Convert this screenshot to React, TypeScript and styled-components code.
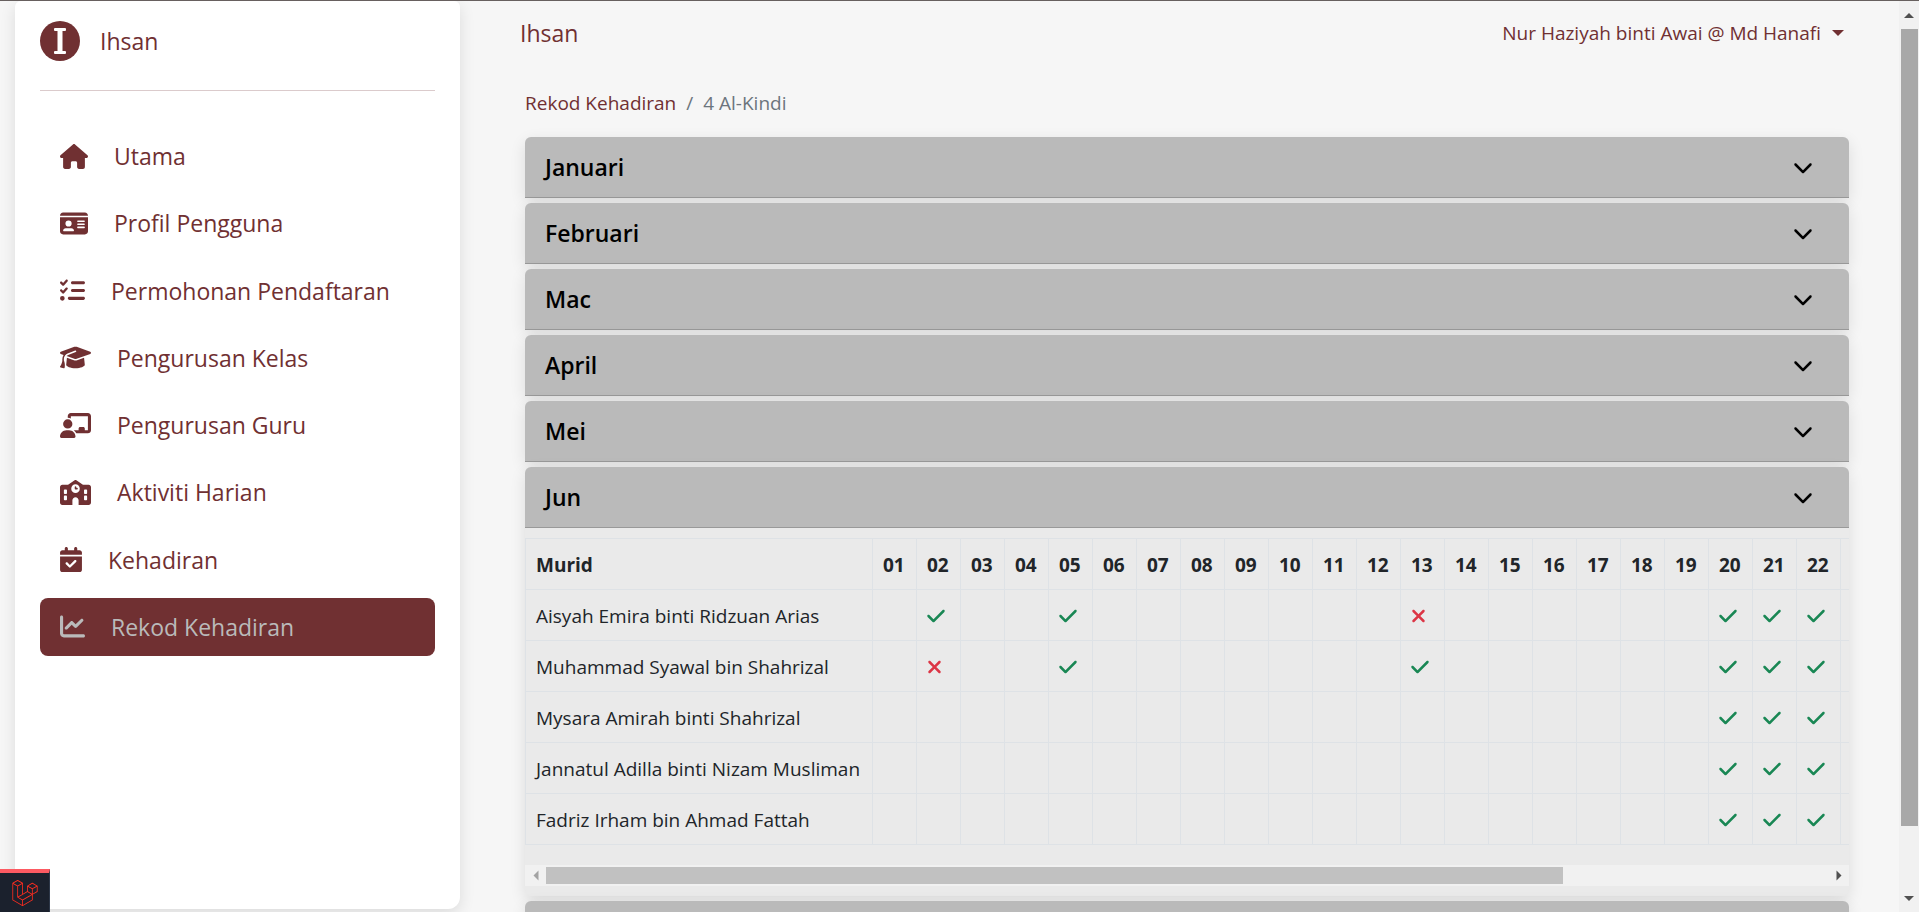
import React, { useRef } from "react";
import styled, { createGlobalStyle, css } from "styled-components";
import {
  FaHouse,
  FaIdCard,
  FaListCheck,
  FaGraduationCap,
  FaChalkboardUser,
  FaSchool,
  FaCalendarCheck,
  FaChartLine,
  FaChevronDown,
  FaCheck,
  FaXmark,
  FaLaravel,
} from "react-icons/fa6";

const maroon = "#703032";
const shadow = "0 5px 16px rgba(0, 0, 0, 0.11)";

const GlobalStyle = createGlobalStyle`
  *, *::before, *::after { box-sizing: border-box; }
  body {
    margin: 0;
    background: #f6f6f6;
    color: #212529;
    font-family: "Segoe UI", "Open Sans", "Noto Sans", sans-serif;
    font-size: 19px;
    line-height: 30px;
  }
  button { font: inherit; cursor: pointer; }
  a { color: inherit; text-decoration: none; }
`;

const Shell = styled.div`
  display: flex;
  height: 100vh;
  overflow: hidden;
  border-top: 1px solid #67605f;
`;

const Sidebar = styled.aside`
  flex: 0 0 445px;
  margin: 0 0 3px 15px;
  padding: 20px 25px;
  background: #fff;
  border-radius: 6px 6px 12px 12px;
  box-shadow: ${shadow};
`;

const Brand = styled.a`
  display: flex;
  align-items: center;
  gap: 20px;
  height: 40px;
  color: ${maroon};
  font-size: 23px;
  line-height: 32px;
`;

const Divider = styled.hr`
  height: 1px;
  margin: 29px 0 36px;
  border: 0;
  background: ${maroon};
  opacity: 0.25;
`;

const NavList = styled.ul`
  display: flex;
  flex-direction: column;
  justify-content: space-between;
  min-height: 529px;
  margin: 0;
  padding: 0;
  list-style: none;
`;

const NavLink = styled.a<{ $active?: boolean; $icon: number }>`
  display: flex;
  align-items: center;
  gap: 26px;
  height: 58px;
  padding: 0 20px;
  border-radius: 8px;
  color: ${maroon};
  font-size: 23px;
  line-height: 32px;
  white-space: nowrap;
  ${(p) =>
    p.$active &&
    css`
      background: ${maroon};
      color: #bababa;
    `}

  svg {
    flex: none;
    width: ${(p) => p.$icon}px;
    height: 25px;
  }
`;

const Main = styled.main`
  flex: 1;
  min-width: 0;
`;

const TopBar = styled.header`
  display: flex;
  align-items: center;
  justify-content: space-between;
  height: 64px;
  padding: 0 55px 0 60px;
  color: ${maroon};
`;

const AppName = styled.a`
  font-size: 23px;
`;

const UserMenu = styled.button`
  display: flex;
  align-items: center;
  gap: 11px;
  padding: 0;
  border: 0;
  background: none;
  color: ${maroon};

  &::after {
    content: "";
    border: 6px solid transparent;
    border-top-color: currentColor;
    border-bottom: 0;
  }
`;

const Content = styled.div`
  padding: 23px 50px 0 65px;
`;

const Breadcrumb = styled.ol`
  display: flex;
  gap: 10px;
  margin: 0 0 19px;
  padding: 0;
  list-style: none;
  color: #6c757d;

  a {
    color: ${maroon};
  }
`;

const Months = styled.div`
  display: flex;
  flex-direction: column;
  gap: 5px;
`;

const Month = styled.section`
  border-radius: 6px;
  background: #eaeaea;
  box-shadow: ${shadow};
`;

const MonthTitle = styled.h2`
  margin: 0;
  font-size: 23px;
  font-weight: 600;
  line-height: 32px;
`;

const MonthButton = styled.button`
  display: flex;
  align-items: center;
  justify-content: space-between;
  width: 100%;
  height: 61px;
  padding: 0 36px 0 20px;
  border: 0;
  border-bottom: 1px solid #999;
  border-radius: 6px 6px 0 0;
  background: #bababa;
  color: #000;

  svg {
    width: 20px;
    height: 20px;
  }
`;

const MonthBody = styled.div`
  padding: 10px 0;
`;

const TableScroll = styled.div`
  overflow-x: auto;
  scrollbar-width: none;
  padding-bottom: 20px;
`;

const Table = styled.table`
  width: 1668px;
  table-layout: fixed;
  border-collapse: collapse;

  th,
  td {
    height: 51px;
    padding: 2px 10px 0;
    border: 1px solid #dee2e6;
    text-align: left;
    white-space: nowrap;
  }

  tbody th {
    font-weight: 400;
  }
`;

const NameCol = styled.col`
  width: 347px;
`;

const DayCol = styled.col`
  width: 44px;
`;

const Present = styled(FaCheck)`
  display: block;
  width: 18px;
  height: 20px;
  color: #198754;
`;

const Absent = styled(FaXmark)`
  display: block;
  width: 15px;
  height: 20px;
  color: #dc3545;
`;

const HorizontalBar = styled.div`
  display: flex;
  align-items: center;
  height: 21px;
  background: #f1f1f1;
`;

const VerticalBar = styled.div`
  display: flex;
  flex: 0 0 20px;
  flex-direction: column;
  align-items: center;
  background: #f1f1f1;
`;

type Direction = "up" | "down" | "left" | "right";

const turn: Record<Direction, number> = { up: 0, right: 90, down: 180, left: 270 };

const ArrowButton = styled.button<{ $dir: Direction; $muted?: boolean }>`
  display: flex;
  flex: none;
  align-items: center;
  justify-content: center;
  width: ${(p) => (p.$dir === "left" || p.$dir === "right" ? 21 : 20)}px;
  height: ${(p) => (p.$dir === "left" || p.$dir === "right" ? 21 : 28)}px;
  padding: 0;
  border: 0;
  background: none;

  &::after {
    content: "";
    border: 5px solid transparent;
    border-bottom-color: ${(p) => (p.$muted ? "#a3a3a3" : "#505050")};
    border-top: 0;
    transform: rotate(${(p) => turn[p.$dir]}deg);
  }
`;

const Track = styled.div<{ $vertical?: boolean }>`
  display: flex;
  flex: 1;
  flex-direction: ${(p) => (p.$vertical ? "column" : "row")};
  align-self: stretch;
  align-items: center;
  justify-content: flex-start;
`;

const Thumb = styled.div<{ $vertical?: boolean }>`
  ${(p) =>
    p.$vertical
      ? css`
          width: 17px;
          height: 93.2%;
          background: #a8a8a8;
        `
      : css`
          width: 79.3%;
          height: 17px;
          background: #c1c1c1;
        `}
`;

const DebugBar = styled.button`
  position: fixed;
  bottom: 0;
  left: 0;
  display: flex;
  align-items: center;
  justify-content: center;
  width: 50px;
  height: 43px;
  padding: 0;
  border: 0;
  border-top: 4px solid #fc5a62;
  border-right: 1px solid #2d3748;
  background: #1b212d;
  color: #ff2d20;

  svg {
    width: 26px;
    height: 26px;
  }
`;

const nav = [
  { label: "Utama", Icon: FaHouse, width: 28 },
  { label: "Profil Pengguna", Icon: FaIdCard, width: 28 },
  { label: "Permohonan Pendaftaran", Icon: FaListCheck, width: 25 },
  { label: "Pengurusan Kelas", Icon: FaGraduationCap, width: 31 },
  { label: "Pengurusan Guru", Icon: FaChalkboardUser, width: 31 },
  { label: "Aktiviti Harian", Icon: FaSchool, width: 31 },
  { label: "Kehadiran", Icon: FaCalendarCheck, width: 22 },
  { label: "Rekod Kehadiran", Icon: FaChartLine, width: 25, active: true },
];

const months = ["Januari", "Februari", "Mac", "April", "Mei", "Jun", "Julai"];
const days = Array.from({ length: 30 }, (_, i) => i + 1);

const students: { name: string; present: number[]; absent: number[] }[] = [
  { name: "Aisyah Emira binti Ridzuan Arias", present: [2, 5, 20, 21, 22], absent: [13] },
  { name: "Muhammad Syawal bin Shahrizal", present: [5, 13, 20, 21, 22], absent: [2] },
  { name: "Mysara Amirah binti Shahrizal", present: [20, 21, 22], absent: [] },
  { name: "Jannatul Adilla binti Nizam Musliman", present: [20, 21, 22], absent: [] },
  { name: "Fadriz Irham bin Ahmad Fattah", present: [20, 21, 22], absent: [] },
];

function Logo() {
  return (
    <svg width="40" height="40" viewBox="0 0 40 40" aria-hidden="true">
      <circle cx="20" cy="20" r="20" fill={maroon} />
      <path
        d="M15 7h10q1 0 1 1v1q0 1-1 1h-2.500v20h2.500q1 0 1 1v1q0 1-1 1h-10q-1 0-1-1v-1q0-1 1-1h2.500v-20h-2.500q-1 0-1-1v-1q0-1 1-1z"
        fill="#fff"
      />
    </svg>
  );
}

function Attendance() {
  const scroller = useRef<HTMLDivElement>(null);
  const scroll = (left: number) => scroller.current?.scrollBy({ left });

  return (
    <MonthBody>
      <TableScroll ref={scroller}>
        <Table>
          <colgroup>
            <NameCol />
            {days.map((d) => (
              <DayCol key={d} />
            ))}
          </colgroup>
          <thead>
            <tr>
              <th scope="col">Murid</th>
              {days.map((d) => (
                <th scope="col" key={d}>
                  {String(d).padStart(2, "0")}
                </th>
              ))}
            </tr>
          </thead>
          <tbody>
            {students.map((s) => (
              <tr key={s.name}>
                <th scope="row">{s.name}</th>
                {days.map((d) => (
                  <td key={d}>
                    {s.present.includes(d) && <Present aria-label="Hadir" />}
                    {s.absent.includes(d) && <Absent aria-label="Tidak hadir" />}
                  </td>
                ))}
              </tr>
            ))}
          </tbody>
        </Table>
      </TableScroll>
      <HorizontalBar>
        <ArrowButton $dir="left" $muted aria-label="Kiri" onClick={() => scroll(-44)} />
        <Track>
          <Thumb />
        </Track>
        <ArrowButton $dir="right" aria-label="Kanan" onClick={() => scroll(44)} />
      </HorizontalBar>
    </MonthBody>
  );
}

export default function App() {
  return (
    <>
      <GlobalStyle />
      <Shell>
        <Sidebar>
          <Brand href="#">
            <Logo />
            Ihsan
          </Brand>
          <Divider />
          <nav>
            <NavList>
              {nav.map(({ label, Icon, width, active }) => (
                <li key={label}>
                  <NavLink
                    href="#"
                    $active={active}
                    $icon={width}
                    aria-current={active ? "page" : undefined}
                  >
                    <Icon aria-hidden="true" />
                    {label}
                  </NavLink>
                </li>
              ))}
            </NavList>
          </nav>
        </Sidebar>

        <Main>
          <TopBar>
            <AppName href="#">Ihsan</AppName>
            <UserMenu>Nur Haziyah binti Awai @ Md Hanafi</UserMenu>
          </TopBar>
          <Content>
            <nav aria-label="breadcrumb">
              <Breadcrumb>
                <li>
                  <a href="#">Rekod Kehadiran</a>
                </li>
                <li aria-hidden="true">/</li>
                <li aria-current="page">4 Al-Kindi</li>
              </Breadcrumb>
            </nav>
            <Months>
              {months.map((m) => (
                <Month key={m}>
                  <MonthTitle>
                    <MonthButton aria-expanded={m === "Jun"}>
                      {m}
                      <FaChevronDown aria-hidden="true" />
                    </MonthButton>
                  </MonthTitle>
                  {m === "Jun" && <Attendance />}
                </Month>
              ))}
            </Months>
          </Content>
        </Main>

        <VerticalBar>
          <ArrowButton $dir="up" aria-label="Atas" />
          <Track $vertical>
            <Thumb $vertical />
          </Track>
          <ArrowButton $dir="down" aria-label="Bawah" />
        </VerticalBar>
      </Shell>
      <DebugBar aria-label="Laravel Debugbar">
        <FaLaravel aria-hidden="true" />
      </DebugBar>
    </>
  );
}
